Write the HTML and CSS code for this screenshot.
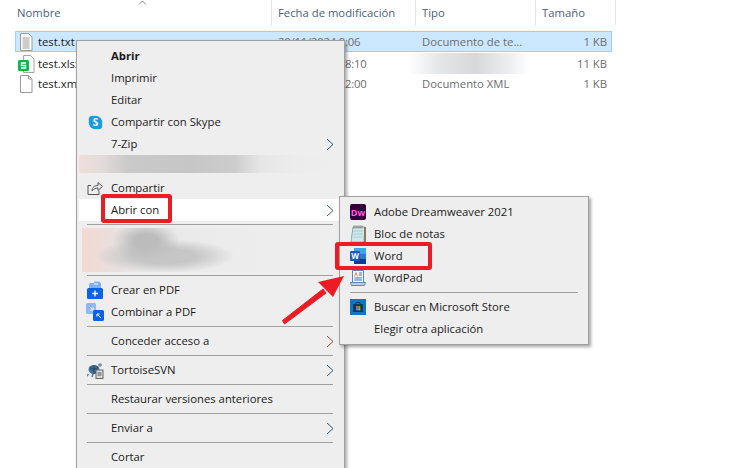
FILE: index.html
```html
<!DOCTYPE html>
<html lang="es">
<head>
  <meta charset="UTF-8" />
  <meta name="viewport" content="width=device-width, initial-scale=1.0" />
  <title>Abrir con - Explorador</title>
  <link rel="stylesheet" href="styles.css">
</head>
<body>
  <div class="explorer">
    <div class="col-header">
      <div class="col col-name">Nombre</div>
      <div class="col col-date">Fecha de modificación</div>
      <div class="col col-type">Tipo</div>
      <div class="col col-size">Tamaño</div>
    </div>
    <svg class="sort-arrow" width="9" height="5" viewBox="0 0 9 5"><path d="M1 4.500 4.500 1 8 4.500" fill="none" stroke="#8a8a8a"/></svg>

    <div class="file-row selected">
      <div class="file-name">
        <svg class="file-icon" width="14" height="18" viewBox="0 0 14 18"><path d="M1.500.5h8l3.500 3.500v13.500h-11.500z" fill="#fff" stroke="#9a9a9a"/><path d="M3.500 5h7M3.500 7h7M3.500 9h7M3.500 11h7M3.500 13h7M3.500 15h7" stroke="#9a9a9a"/></svg>
        test.txt
      </div>
      <div class="file-cell file-date">20/11/2024 9:06</div>
      <div class="file-cell">Documento de te...</div>
      <div class="file-cell file-size">1 KB</div>
    </div>
    <div class="file-row">
      <div class="file-name">
        <svg class="file-icon icon-wide" width="17" height="18" viewBox="0 0 17 18"><path d="M5.500.5h7l3.500 3.500v13.500h-10.500z" fill="#fff" stroke="#a5a5a5"/><rect x="0" y="5" width="11" height="11" rx="1.500" fill="#12b34b"/><path d="M8 8H3.500v2.500h4V13H3" fill="none" stroke="#fff" stroke-width="1.400"/></svg>
        test.xlsx
      </div>
      <div class="file-cell file-date">20/11/2024 18:10</div>
      <div class="file-cell"><span class="blur-type"></span></div>
      <div class="file-cell file-size">11 KB</div>
    </div>
    <div class="file-row">
      <div class="file-name">
        <svg class="file-icon" width="14" height="18" viewBox="0 0 14 18"><path d="M1.500.5h8l3.500 3.500v13.500h-11.500z" fill="#fff" stroke="#9a9a9a"/><path d="M9.500.5v3.500h3.500" fill="none" stroke="#9a9a9a"/></svg>
        test.xml
      </div>
      <div class="file-cell file-date">20/11/2024 12:00</div>
      <div class="file-cell">Documento XML</div>
      <div class="file-cell file-size">1 KB</div>
    </div>
  </div>

  <!-- menu contextual -->
  <div class="menu main-menu">
    <div class="item bold"><span class="slot"></span>Abrir</div>
    <div class="item"><span class="slot"></span>Imprimir</div>
    <div class="item"><span class="slot"></span>Editar</div>
    <div class="item">
      <span class="slot">
        <svg width="15" height="15" viewBox="0 0 15 15"><circle cx="7.500" cy="7.500" r="6.800" fill="#1a9de0"/><circle cx="4.500" cy="4.500" r="3.800" fill="#1a9de0"/><circle cx="10.500" cy="10.500" r="3.800" fill="#1a9de0"/><text x="7.500" y="11" class="skype-s">S</text></svg>
      </span>
      Compartir con Skype
    </div>
    <div class="item"><span class="slot"></span>7-Zip<svg class="chevron" width="8" height="13" viewBox="0 0 8 13"><path d="M1 1l6 5.500-6 5.500" fill="none" stroke="#34577c"/></svg></div>
    <div class="item"><div class="blur-one"></div></div>
    <div class="item">
      <span class="slot">
        <svg width="16" height="14" viewBox="0 0 16 14"><path d="M4 4.500H1v9h11V10" fill="none" stroke="#555"/><path d="M5 10c0-4 3-5.500 6-5.500V1.500l4.500 4-4.500 4V7C8.500 7 6.500 8 5 10z" fill="none" stroke="#555"/></svg>
      </span>
      Compartir
    </div>
    <div class="item active"><span class="slot"></span>Abrir con<svg class="chevron" width="8" height="13" viewBox="0 0 8 13"><path d="M1 1l6 5.500-6 5.500" fill="none" stroke="#34577c"/></svg></div>
    <div class="sep"></div>
    <div class="blur-two"></div>
    <div class="sep"></div>
    <div class="item">
      <span class="slot">
        <svg width="18" height="18" viewBox="0 0 18 18"><path d="M3 5 3.500 2h4l1-1.500H13l2 2V8H3z" fill="#7fb0f5"/><path d="M8 3h4" stroke="#fff"/><rect x="1" y="7" width="16" height="11" rx="1.500" fill="#0a62ea"/><path d="M9 9.500v6M6 12.500h6" stroke="#fff" stroke-width="1.300"/></svg>
      </span>
      Crear en PDF
    </div>
    <div class="item">
      <span class="slot">
        <svg width="18" height="18" viewBox="0 0 18 18"><rect x="0" y="0" width="10" height="11" rx="1.500" fill="#8db8f7"/><path d="M3 3l4 4M7 4.500V7H4.500" fill="none" stroke="#fff"/><rect x="7" y="7" width="11" height="11" rx="1.500" fill="#0a62ea"/><path d="M15 15l-4-4M11 13.500V11h2.500" fill="none" stroke="#fff"/></svg>
      </span>
      Combinar a PDF
    </div>
    <div class="sep"></div>
    <div class="item"><span class="slot"></span>Conceder acceso a<svg class="chevron" width="8" height="13" viewBox="0 0 8 13"><path d="M1 1l6 5.500-6 5.500" fill="none" stroke="#a8443e"/></svg></div>
    <div class="sep"></div>
    <div class="item">
      <span class="slot">
        <svg width="17" height="17" viewBox="0 0 17 17"><ellipse cx="7" cy="7.500" rx="5.500" ry="4.500" fill="#3f6d99"/><path d="M3 5.500l4 2 4-2M7 3v9" stroke="#24466a" fill="none"/><circle cx="13" cy="3" r="1.800" fill="#6d8aa3"/><path d="M1.500 12 0 14M6 12l-1 3" stroke="#5a7a96" stroke-width="1.500"/><rect x="9" y="8" width="7" height="8.500" fill="#d8d8d8" stroke="#666"/><path d="M10.500 11h4M10.500 13h4" stroke="#555"/></svg>
      </span>
      TortoiseSVN<svg class="chevron" width="8" height="13" viewBox="0 0 8 13"><path d="M1 1l6 5.500-6 5.500" fill="none" stroke="#34577c"/></svg>
    </div>
    <div class="sep"></div>
    <div class="item"><span class="slot"></span>Restaurar versiones anteriores</div>
    <div class="sep"></div>
    <div class="item"><span class="slot"></span>Enviar a<svg class="chevron" width="8" height="13" viewBox="0 0 8 13"><path d="M1 1l6 5.500-6 5.500" fill="none" stroke="#34577c"/></svg></div>
    <div class="sep"></div>
    <div class="item"><span class="slot"></span>Cortar</div>
  </div>

  <!-- submenu abrir con -->
  <div class="menu sub-menu">
    <div class="item">
      <span class="slot">
        <svg width="16" height="16" viewBox="0 0 16 16"><rect width="16" height="16" rx="2" fill="#35003a"/><text x="8" y="11.500" class="dw-text">Dw</text></svg>
      </span>
      Adobe Dreamweaver 2021
    </div>
    <div class="item">
      <span class="slot">
        <svg width="16" height="18" viewBox="0 0 16 18"><path d="M3 2h12l-1 15H1z" fill="#cfe8ea" stroke="#8fa8ac"/><path d="M3 6h10M3 9h10M2.500 12h10" stroke="#a9cdd3"/><path d="M4 .5v3M6 .5v3M8 .5v3M10 .5v3M12 .5v3" stroke="#777"/><path d="M14 2h2v15h-2z" fill="#8c7a54"/></svg>
      </span>
      Bloc de notas
    </div>
    <div class="item">
      <span class="slot">
        <svg width="16" height="16" viewBox="0 0 16 16"><rect x="4" width="12" height="5.500" fill="#41a5ee"/><rect x="4" y="5.300" width="12" height="5.500" fill="#2b7cd3"/><rect x="4" y="10.600" width="12" height="5.400" fill="#103f91"/><rect x="0" y="3" width="10" height="10" rx="1" fill="#185abd"/><text x="5" y="11" class="word-w">W</text></svg>
      </span>
      Word
    </div>
    <div class="item">
      <span class="slot">
        <svg width="16" height="16" viewBox="0 0 16 16"><path d="M2.500.5h11v12h-11z" fill="#f4f8fc" stroke="#5b86b5"/><path d="M4.500 6.500 6 2.500l1.500 4" fill="none" stroke="#e8862a"/><path d="M9 3h3M9 5h3M4.500 8h7.500M4.500 10h7.500" stroke="#3d74b5"/><path d="M.5 12.500h15l-1 3h-13z" fill="#b9cfe6" stroke="#5b86b5"/></svg>
      </span>
      WordPad
    </div>
    <div class="sep"></div>
    <div class="item">
      <span class="slot">
        <svg width="16" height="16" viewBox="0 0 16 16"><rect width="16" height="16" fill="#0f75c4"/><path d="M3 5h10v8H3z" fill="#10375c"/><path d="M6 5V3.500h4V5" fill="none" stroke="#10375c"/><rect x="6" y="7" width="2" height="2" fill="#e5533d"/><rect x="8.300" y="7" width="2" height="2" fill="#6ab92f"/><rect x="6" y="9.300" width="2" height="2" fill="#2fa4e7"/><rect x="8.300" y="9.300" width="2" height="2" fill="#f2b705"/></svg>
      </span>
      Buscar en Microsoft Store
    </div>
    <div class="item"><span class="slot"></span>Elegir otra aplicación</div>
  </div>

  <!-- marcas rojas encima de la captura -->
  <div class="mark mark-open"></div>
  <div class="mark mark-word"></div>
  <svg class="arrow" width="70" height="60" viewBox="0 0 70 60">
    <path d="M3.500 50.500 5.500 54 47 23 44 19z" fill="#ed1c24" stroke="#ed1c24" stroke-linejoin="round"/>
    <path d="M65 6 39 12 54 27z" fill="#ed1c24"/>
  </svg>
</body>
</html>
```

FILE: styles.css
```css
html, body {
  height: 100%;
  margin: 0;
  overflow: hidden;
}
body {
  position: relative;
  background: #fff;
  color: #1a1a1a;
  font-family: "Open Sans", "Noto Sans", sans-serif;
  font-size: 11.3px;
}

/* lista de archivos */
.col-header {
  display: grid;
  grid-template-columns: 272px 144px 120px 80px;
  height: 25px;
  margin-bottom: 6px;
  color: #4c607a;
}
.col {
  display: flex;
  align-items: center;
  padding-left: 6px;
  border-right: 1px solid #e5e5e5;
}
.col-name {
  padding-left: 17px;
}
.sort-arrow {
  position: absolute;
  left: 138px;
  top: 0;
}
.file-row {
  display: grid;
  grid-template-columns: 255px 144px 120px 76px;
  box-sizing: border-box;
  width: 597px;
  height: 21px;
  margin-left: 15px;
  border: 1px solid transparent;
  align-items: center;
}
.file-row.selected {
  background: #cce8ff;
  border-color: #99d1ff;
}
.file-name {
  display: flex;
  align-items: center;
  gap: 5px;
  padding-left: 3px;
}
.file-icon {
  flex: none;
}
.icon-wide {
  margin-left: -1px;
  margin-right: -2px;
}
.file-cell {
  padding-left: 7px;
  color: #6d6d6d;
  white-space: nowrap;
}
.file-date {
  letter-spacing: -0.2px;
}
.file-size {
  padding-right: 4px;
  text-align: right;
}
.blur-type {
  display: block;
  width: 121px;
  height: 21px;
  margin-left: -13px;
  background: linear-gradient(90deg, #fff, #e4e6e8 25%, #d6d8da 55%, #eef0f2 85%, #fff);
}

/* menus */
.menu {
  position: absolute;
  box-sizing: border-box;
  padding: 4px 2px;
  background: #eeeeee;
  border: 1px solid #a0a0a0;
  box-shadow: 2px 2px 3px rgba(0, 0, 0, 0.35);
}
.main-menu {
  left: 76px;
  top: 40px;
  bottom: 0;
  width: 269px;
  padding-bottom: 0;
  border-bottom: 0;
}
.sub-menu {
  left: 339px;
  top: 196px;
  width: 250px;
}
.item {
  display: flex;
  align-items: center;
  box-sizing: border-box;
  height: 22px;
  padding-bottom: 2px;
  white-space: nowrap;
}
.bold {
  font-weight: 700;
}
.active {
  background: #fff;
}
.slot {
  display: flex;
  flex: none;
  align-items: center;
  justify-content: center;
  width: 32px;
  margin-bottom: -2px;
}
.chevron {
  margin-left: auto;
  margin-right: 8px;
  margin-bottom: -2px;
}
.sep {
  height: 1px;
  margin: 3px 9px 3px 8px;
  background: #a0a0a0;
}
.sub-menu .sep {
  margin-left: 8px;
  margin-right: 8px;
}
.blur-one {
  width: 252px;
  height: 18px;
  margin-bottom: 2px;
  background: linear-gradient(90deg, #f0dfdb, #e4dcda 8%, #c9c9c9 20%, #c6c6c6 45%, #cdcdcd 62%, #e6e6e6 72%, #ececec 85%, #eeeeee);
}
.blur-two {
  width: 254px;
  height: 44px;
  margin-left: 3px;
  background:
    radial-gradient(ellipse 34px 20px at 64px 13px, #bcbcbc 35%, rgba(188, 188, 188, 0)),
    radial-gradient(ellipse 70px 17px at 82px 28px, #c6c6c6 45%, rgba(198, 198, 198, 0)),
    linear-gradient(90deg, #f4d8d2, #eadfdc 12%, #e8e8e8 22%, #ececec 60%, #eeeeee);
}

/* textos dentro de los iconos */
.skype-s {
  fill: #fff;
  font-size: 10px;
  font-weight: 700;
  text-anchor: middle;
}
.dw-text {
  fill: #ff5ce1;
  font-size: 9px;
  font-weight: 700;
  text-anchor: middle;
}
.word-w {
  fill: #fff;
  font-size: 8px;
  font-weight: 700;
  text-anchor: middle;
}

/* anotaciones */
.mark {
  position: absolute;
  box-sizing: border-box;
  border: 4px solid #ed1c24;
  border-radius: 3px;
}
.mark-open {
  left: 101px;
  top: 194px;
  width: 71px;
  height: 29px;
}
.mark-word {
  left: 335px;
  top: 242px;
  width: 97px;
  height: 28px;
}
.arrow {
  position: absolute;
  left: 279px;
  top: 270px;
}
```
